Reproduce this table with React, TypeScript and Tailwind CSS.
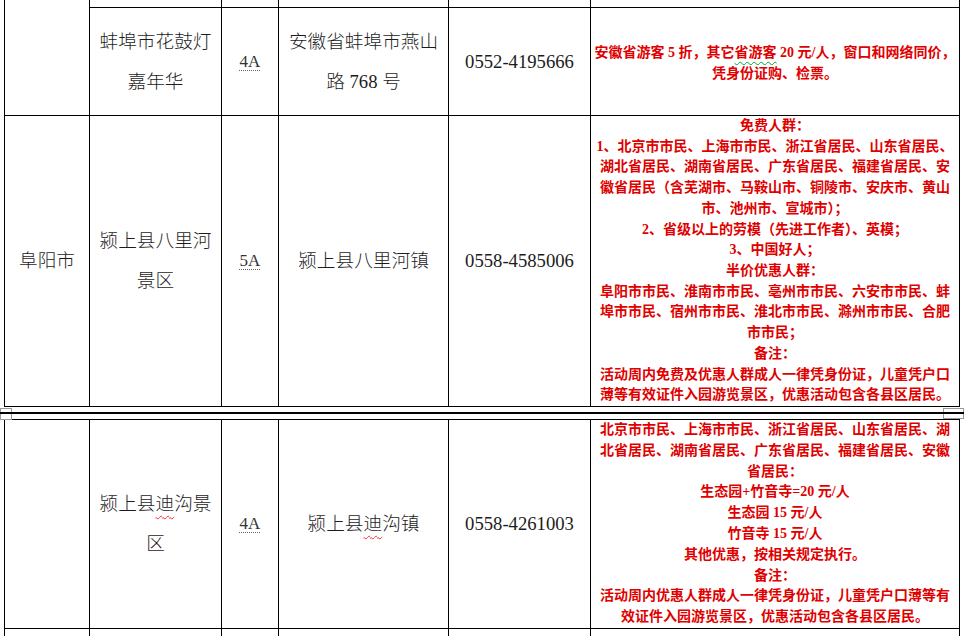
import type { ReactNode } from 'react'

const blackFont = "font-['Liberation_Serif','Noto_Sans_CJK_SC',serif] text-[18.67px] leading-[40px] text-[#1c1c1c] font-light"
const redFont = "font-['Liberation_Serif','Noto_Sans_CJK_SC',serif] text-[14px] font-bold text-[#e00000] whitespace-nowrap"

function Cell({ children, className = '' }: { children?: ReactNode; className?: string }) {
  return (
    <div className={`flex items-center justify-center border-r border-b border-black text-center ${className}`}>
      {children}
    </div>
  )
}

function Lines({ lines, className }: { lines: ReactNode[]; className: string }) {
  return (
    <div className={className}>
      {lines.map((l, i) => (
        <div key={i}>{l}</div>
      ))}
    </div>
  )
}

function Grade({ v }: { v: string }) {
  return (
    <span className="font-['Liberation_Serif',serif] text-[17px] leading-[40px] text-[#333] underline decoration-dotted decoration-[#666] decoration-1 underline-offset-[3px]">
      {v}
    </span>
  )
}

function Spell({ children }: { children: ReactNode }) {
  return <span className="underline decoration-wavy decoration-red-500 decoration-1 underline-offset-[5px]">{children}</span>
}

const cols = 'grid-cols-[85px_132px_57px_170px_142px_369px]'

export default function App() {
  return (
    <div className="w-[964px] h-[636px] overflow-hidden bg-white">
      {/* first page: 蚌埠 + 阜阳 rows */}
      <div className={`ml-[4px] grid w-[956px] border-l border-black ${cols} grid-rows-[8px_108px_291px]`}>
        <Cell className="row-span-2" />
        <Cell />
        <Cell />
        <Cell />
        <Cell />
        <Cell />

        <Cell>
          <Lines className={blackFont} lines={['蚌埠市花鼓灯', '嘉年华']} />
        </Cell>
        <Cell>
          <Grade v="4A" />
        </Cell>
        <Cell>
          <Lines className={blackFont} lines={['安徽省蚌埠市燕山', '路 768 号']} />
        </Cell>
        <Cell>
          <span className={blackFont}>0552-4195666</span>
        </Cell>
        <Cell className="pt-[2px]">
          <Lines
            className={`${redFont} leading-[21px]`}
            lines={[
              <>
                安徽省游客 5 折，其它
                <span className="underline decoration-wavy decoration-green-600 decoration-1 underline-offset-[4px]">省游客</span> 20
                元/人，窗口和网络同价，
              </>,
              '凭身份证购、检票。',
            ]}
          />
        </Cell>

        <Cell>
          <span className={blackFont}>阜阳市</span>
        </Cell>
        <Cell>
          <Lines className={blackFont} lines={['颍上县八里河', '景区']} />
        </Cell>
        <Cell>
          <Grade v="5A" />
        </Cell>
        <Cell>
          <span className={blackFont}>颍上县八里河镇</span>
        </Cell>
        <Cell>
          <span className={blackFont}>0558-4585006</span>
        </Cell>
        <Cell>
          <Lines
            className={`${redFont} leading-[20.7px]`}
            lines={[
              '免费人群：',
              '1、北京市市民、上海市市民、浙江省居民、山东省居民、',
              '湖北省居民、湖南省居民、广东省居民、福建省居民、安',
              '徽省居民（含芜湖市、马鞍山市、铜陵市、安庆市、黄山',
              '市、池州市、宣城市）；',
              '2、省级以上的劳模（先进工作者）、英模；',
              '3、中国好人；',
              '半价优惠人群：',
              '阜阳市市民、淮南市市民、亳州市市民、六安市市民、蚌',
              '埠市市民、宿州市市民、淮北市市民、滁州市市民、合肥',
              '市市民；',
              '备注：',
              '活动周内免费及优惠人群成人一律凭身份证，儿童凭户口',
              '薄等有效证件入园游览景区，优惠活动包含各县区居民。',
            ]}
          />
        </Cell>
      </div>

      {/* page break marker */}
      <div className="relative h-[12px] pt-[5px]">
        <div className="absolute left-0 top-[1px] h-[12px] w-[12px] border border-[#9a9a9a] bg-white" />
        <div className="absolute right-0 top-[1px] h-[11px] w-[21px] border border-[#9a9a9a] bg-white" />
        <div className="relative z-10 h-[2px] bg-black" />
      </div>

      {/* second page: 迪沟 row */}
      <div className={`ml-[4px] grid w-[956px] border-l border-t border-black ${cols} grid-rows-[209px_8px]`}>
        <Cell />
        <Cell>
          <Lines className={blackFont} lines={[<>颍上县<Spell>迪</Spell>沟景</>, '区']} />
        </Cell>
        <Cell>
          <Grade v="4A" />
        </Cell>
        <Cell>
          <span className={blackFont}>
            颍上县<Spell>迪</Spell>沟镇
          </span>
        </Cell>
        <Cell>
          <span className={blackFont}>0558-4261003</span>
        </Cell>
        <Cell>
          <Lines
            className={`${redFont} leading-[20.8px]`}
            lines={[
              '北京市市民、上海市市民、浙江省居民、山东省居民、湖',
              '北省居民、湖南省居民、广东省居民、福建省居民、安徽',
              '省居民：',
              '生态园+竹音寺=20 元/人',
              '生态园 15 元/人',
              '竹音寺 15 元/人',
              '其他优惠，按相关规定执行。',
              '备注：',
              '活动周内优惠人群成人一律凭身份证，儿童凭户口薄等有',
              '效证件入园游览景区，优惠活动包含各县区居民。',
            ]}
          />
        </Cell>

        <Cell />
        <Cell />
        <Cell />
        <Cell />
        <Cell />
        <Cell />
      </div>
    </div>
  )
}
